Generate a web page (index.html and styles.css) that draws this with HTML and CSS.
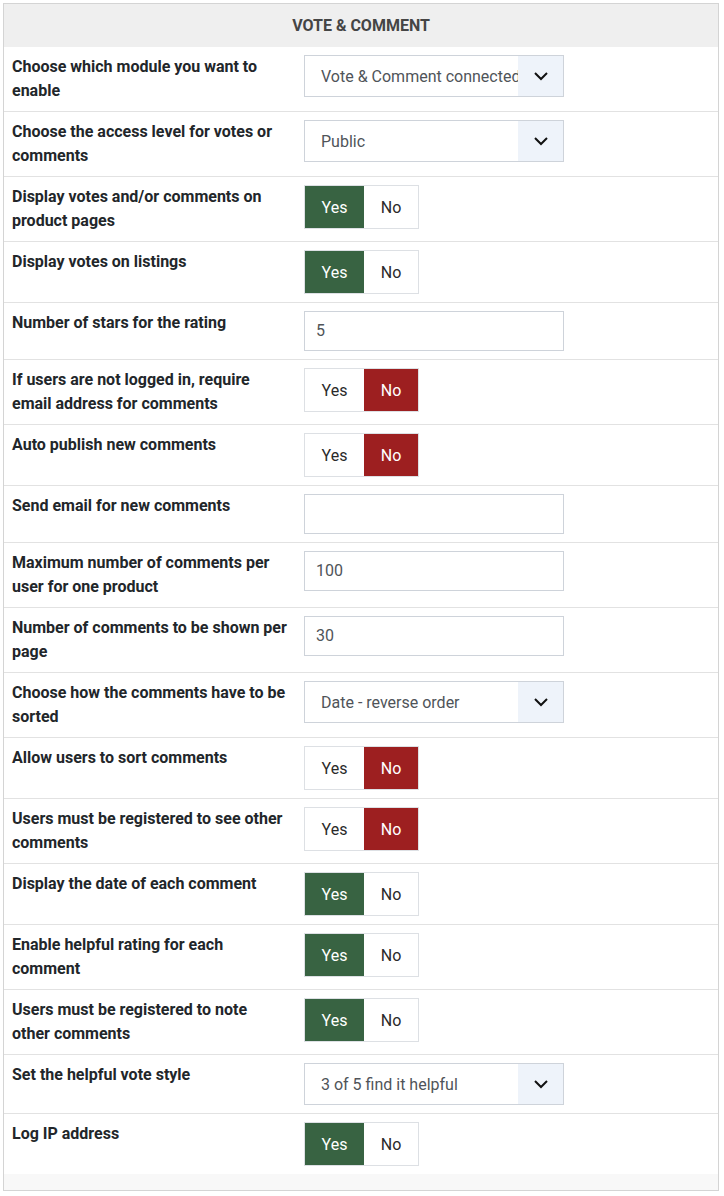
FILE: index.html
```html
<!DOCTYPE html>
<html lang="en">
<head>
  <meta charset="UTF-8">
  <title>Vote &amp; Comment</title>
  <link rel="stylesheet" href="styles.css">
</head>
<body>
  <div class="panel">
    <div class="panel-head">Vote &amp; Comment</div>

    <div class="row first">
      <div class="label">Choose which module you want to enable</div>
      <div class="value">
        <div class="select"><span class="select-text">Vote &amp; Comment connected</span><span class="arrow"><svg width="16" height="10" viewBox="0 0 16 10"><polyline points="2,2 8,8 14,2" fill="none" stroke="#111" stroke-width="2"/></svg></span></div>
      </div>
    </div>

    <div class="row">
      <div class="label">Choose the access level for votes or comments</div>
      <div class="value">
        <div class="select"><span class="select-text">Public</span><span class="arrow"><svg width="16" height="10" viewBox="0 0 16 10"><polyline points="2,2 8,8 14,2" fill="none" stroke="#111" stroke-width="2"/></svg></span></div>
      </div>
    </div>

    <div class="row">
      <div class="label">Display votes and/or comments on product pages</div>
      <div class="value"><div class="toggle"><span class="btn yes on">Yes</span><span class="btn">No</span></div></div>
    </div>

    <div class="row">
      <div class="label">Display votes on listings</div>
      <div class="value"><div class="toggle"><span class="btn yes on">Yes</span><span class="btn">No</span></div></div>
    </div>

    <div class="row">
      <div class="label">Number of stars for the rating</div>
      <div class="value"><div class="input">5</div></div>
    </div>

    <div class="row">
      <div class="label">If users are not logged in, require email address for comments</div>
      <div class="value"><div class="toggle"><span class="btn yes">Yes</span><span class="btn no on">No</span></div></div>
    </div>

    <div class="row">
      <div class="label">Auto publish new comments</div>
      <div class="value"><div class="toggle"><span class="btn yes">Yes</span><span class="btn no on">No</span></div></div>
    </div>

    <div class="row">
      <div class="label">Send email for new comments</div>
      <div class="value"><div class="input"></div></div>
    </div>

    <div class="row">
      <div class="label">Maximum number of comments per user for one product</div>
      <div class="value"><div class="input">100</div></div>
    </div>

    <div class="row">
      <div class="label">Number of comments to be shown per page</div>
      <div class="value"><div class="input">30</div></div>
    </div>

    <div class="row">
      <div class="label">Choose how the comments have to be sorted</div>
      <div class="value">
        <div class="select"><span class="select-text">Date - reverse order</span><span class="arrow"><svg width="16" height="10" viewBox="0 0 16 10"><polyline points="2,2 8,8 14,2" fill="none" stroke="#111" stroke-width="2"/></svg></span></div>
      </div>
    </div>

    <div class="row">
      <div class="label">Allow users to sort comments</div>
      <div class="value"><div class="toggle"><span class="btn yes">Yes</span><span class="btn no on">No</span></div></div>
    </div>

    <div class="row">
      <div class="label">Users must be registered to see other comments</div>
      <div class="value"><div class="toggle"><span class="btn yes">Yes</span><span class="btn no on">No</span></div></div>
    </div>

    <div class="row">
      <div class="label">Display the date of each comment</div>
      <div class="value"><div class="toggle"><span class="btn yes on">Yes</span><span class="btn">No</span></div></div>
    </div>

    <div class="row">
      <div class="label">Enable helpful rating for each comment</div>
      <div class="value"><div class="toggle"><span class="btn yes on">Yes</span><span class="btn">No</span></div></div>
    </div>

    <div class="row">
      <div class="label">Users must be registered to note other comments</div>
      <div class="value"><div class="toggle"><span class="btn yes on">Yes</span><span class="btn">No</span></div></div>
    </div>

    <div class="row">
      <div class="label">Set the helpful vote style</div>
      <div class="value">
        <div class="select"><span class="select-text">3 of 5 find it helpful</span><span class="arrow"><svg width="16" height="10" viewBox="0 0 16 10"><polyline points="2,2 8,8 14,2" fill="none" stroke="#111" stroke-width="2"/></svg></span></div>
      </div>
    </div>

    <div class="row">
      <div class="label">Log IP address</div>
      <div class="value"><div class="toggle"><span class="btn yes on">Yes</span><span class="btn">No</span></div></div>
    </div>

    <div class="panel-foot"></div>
  </div>
</body>
</html>
```

FILE: styles.css
```css
:root {
  --line: #e2e2e2;
  --field-border: #ced3da;
  --green: #386342;
  --red: #9d1f20;
  --text: #22262a;
}

body {
  margin: 3px;
  background: #fff;
  font-family: Roboto, "Liberation Sans", sans-serif;
  color: var(--text);
}

.panel {
  width: 714px;
  border: 1px solid #d4d4d4;
}

.panel-head {
  background: #efefef;
  height: 43px;
  line-height: 44px;
  text-align: center;
  text-transform: uppercase;
  font-weight: bold;
  font-size: 16px;
  color: #454545;
}

.row {
  display: grid;
  grid-template-columns: 292px 1fr;
  padding: 8px 8px;
  border-top: 1px solid var(--line);
}

.row.first {
  border-top: none;
}

.label {
  font-weight: bold;
  font-size: 16px;
  line-height: 24px;
  padding-right: 17px;
}

.select {
  width: 258px;
  height: 40px;
  border: 1px solid var(--field-border);
  display: flex;
  align-items: center;
  font-size: 16px;
  color: #4f5459;
}

.select-text {
  flex: 1;
  padding-left: 16px;
  white-space: nowrap;
  overflow: hidden;
}

.arrow {
  width: 45px;
  height: 100%;
  background: #eef3fa;
  display: flex;
  align-items: center;
  justify-content: center;
}

.input {
  width: 247px;
  height: 38px;
  line-height: 38px;
  border: 1px solid var(--field-border);
  padding-left: 11px;
  font-size: 16px;
  color: #4f5459;
}

.toggle {
  display: inline-flex;
  border: 1px solid #dde0e4;
  height: 42px;
}

.btn {
  width: 54px;
  display: flex;
  align-items: center;
  justify-content: center;
  font-size: 16px;
  color: #2a2a2a;
}

.btn.yes {
  width: 59px;
}

.btn.yes.on {
  background: var(--green);
  color: #fff;
}

.btn.no.on {
  background: var(--red);
  color: #fff;
}

.panel-foot {
  height: 16px;
  background: #f8f8f8;
}
```
